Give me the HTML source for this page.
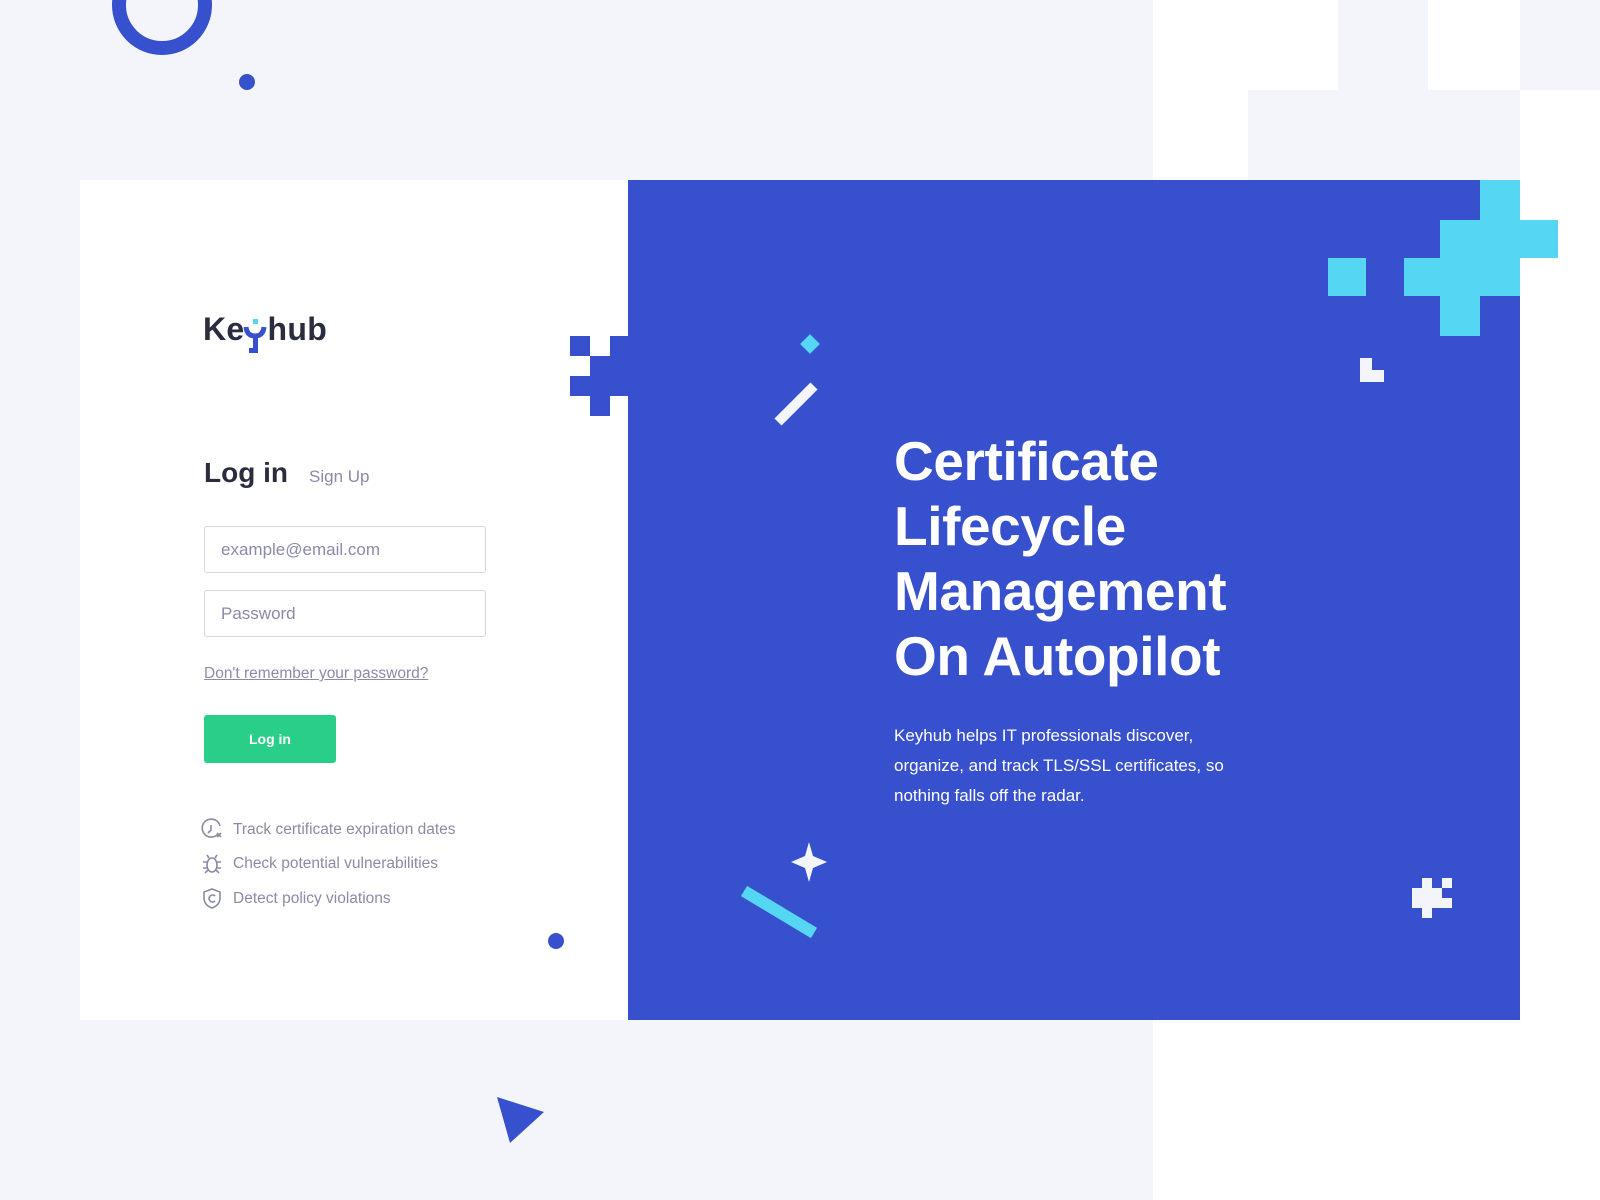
<!DOCTYPE html>
<html><head><meta charset="utf-8"><style>
*{margin:0;padding:0;box-sizing:border-box}
body{width:1600px;height:1200px;position:relative;overflow:hidden;background:#f4f5fa;font-family:"Liberation Sans",sans-serif}
.a{position:absolute}
.blue{background:#3750cd}.cy{background:#55d6f2}.g{background:#f4f5fa}.w{background:#fff}
.inp{position:absolute;left:204px;width:282px;height:47px;border:1px solid #d6d5e6;border-radius:3px;background:#fff;font-size:17px;color:#8b8aa8;padding:13px 0 0 16px}
.feat{position:absolute;left:233px;font-size:15.5px;color:#8a8aa6}
.h{position:absolute;left:894px;color:#fff;font-weight:bold;font-size:55px;letter-spacing:-0.4px}
</style></head><body>
<div class="a w" style="left:1153px;top:0;width:447px;height:1200px"></div>
<div class="a g" style="left:1338px;top:0;width:90px;height:90px"></div>
<div class="a g" style="left:1520px;top:0;width:80px;height:90px"></div>
<div class="a g" style="left:1248px;top:90px;width:272px;height:90px"></div>

<svg class="a" style="left:0;top:0" width="600" height="200"><circle cx="162" cy="5" r="43" fill="none" stroke="#3750cd" stroke-width="14"/><circle cx="247" cy="82" r="8" fill="#3750cd"/></svg>

<div class="a w" style="left:80px;top:180px;width:548px;height:840px"></div>
<div class="a blue" style="left:628px;top:180px;width:892px;height:840px"></div>

<div class="a blue" style="left:570px;top:336px;width:20px;height:20px"></div>
<div class="a blue" style="left:610px;top:336px;width:18px;height:20px"></div>
<div class="a blue" style="left:590px;top:356px;width:38px;height:20px"></div>
<div class="a blue" style="left:570px;top:376px;width:58px;height:20px"></div>
<div class="a blue" style="left:590px;top:396px;width:20px;height:20px"></div>

<div class="a cy" style="left:1480px;top:180px;width:40px;height:40px"></div>
<div class="a cy" style="left:1440px;top:220px;width:118px;height:38px"></div>
<div class="a cy" style="left:1404px;top:258px;width:116px;height:38px"></div>
<div class="a cy" style="left:1440px;top:296px;width:40px;height:40px"></div>
<div class="a cy" style="left:1328px;top:258px;width:38px;height:38px"></div>
<div class="a g" style="left:1360px;top:358px;width:12px;height:24px"></div>
<div class="a g" style="left:1360px;top:370px;width:24px;height:12px"></div>

<div class="a g" style="left:1422px;top:878px;width:10px;height:40px"></div>
<div class="a g" style="left:1412px;top:888px;width:30px;height:20px"></div>
<div class="a g" style="left:1442px;top:878px;width:10px;height:10px"></div>
<div class="a g" style="left:1442px;top:898px;width:10px;height:10px"></div>

<svg class="a" style="left:700px;top:320px" width="200" height="650">
<rect x="803" y="337" width="14" height="14" fill="#55d6f2" transform="translate(-700,-320) rotate(45 810 344)"/>
<line x1="78" y1="102" x2="114" y2="66" stroke="#f4f5fa" stroke-width="10"/>
<path d="M109 522 L113 536 L127 542 L113 548 L109 562 L105 548 L91 542 L105 536Z" fill="#f4f5fa"/>
<line x1="44" y1="571" x2="114" y2="613" stroke="#55d6f2" stroke-width="12"/>
</svg>

<svg class="a" style="left:0;top:0" width="1200" height="1200">
<circle cx="556" cy="941" r="8" fill="#3750cd"/>
<path d="M497 1097 L544 1112 L510 1143Z" fill="#3750cd"/>
</svg>

<div class="a" style="left:203px;top:311px;font-size:32px;font-weight:bold;color:#2a2d3e;letter-spacing:0.3px">Ke<span style="display:inline-block;width:23px"></span>hub</div>
<svg class="a" style="left:243px;top:318px" width="26" height="40"><rect x="10" y="1" width="5" height="5" fill="#55d6f2"/><path d="M3 9 Q4 18 12 18 Q20 18 21 9" fill="none" stroke="#3750cd" stroke-width="5"/><rect x="10" y="17" width="5" height="18" fill="#3750cd"/><rect x="6" y="30" width="7" height="5" fill="#3750cd"/></svg>

<div class="a" style="left:204px;top:457px;font-size:28px;font-weight:bold;color:#2a2d3e">Log in</div>
<div class="a" style="left:309px;top:467px;font-size:17px;color:#8b8aa8">Sign Up</div>

<div class="inp" style="top:526px">example@email.com</div>
<div class="inp" style="top:590px">Password</div>
<div class="a" style="left:204px;top:665px;font-size:15.5px;color:#8b8aa8;text-decoration:underline">Don't remember your password?</div>
<div class="a" style="left:204px;top:715px;width:132px;height:48px;background:#29ce88;border-radius:3px;color:#fff;font-weight:bold;font-size:14px;text-align:center;line-height:48px">Log in</div>

<svg class="a" style="left:200px;top:817px" width="26" height="95" fill="none" stroke="#8a8aa6" stroke-width="1.6">
<path d="M18 17 A9 9 0 1 1 20 9"/><path d="M11 8 V13 L8 16"/><path d="M17 16 l4 4 M21 16 l-4 4"/>
<ellipse cx="12" cy="48" rx="5" ry="7"/><path d="M9 41 l-2-3 M15 41 l2-3 M3 45 h4 M17 45 h4 M3 51 h4 M17 51 h4 M5 56 l3-3 M19 56 l-3-3"/>
<path d="M12 72 L20 75 V81 Q20 88 12 91 Q4 88 4 81 V75Z"/><path d="M15 79 A3.5 3.5 0 1 0 15 84"/>
</svg>
<div class="feat" style="top:821px">Track certificate expiration dates</div>
<div class="feat" style="top:855px">Check potential vulnerabilities</div>
<div class="feat" style="top:890px">Detect policy violations</div>

<div class="h" style="top:429px">Certificate</div>
<div class="h" style="top:494px">Lifecycle</div>
<div class="h" style="top:559px">Management</div>
<div class="h" style="top:624px">On Autopilot</div>
<div class="a" style="left:894px;top:721px;width:360px;font-size:17px;line-height:30px;color:#fff">Keyhub helps IT professionals discover, organize, and track TLS/SSL certificates, so nothing falls off the radar.</div>
</body></html>
